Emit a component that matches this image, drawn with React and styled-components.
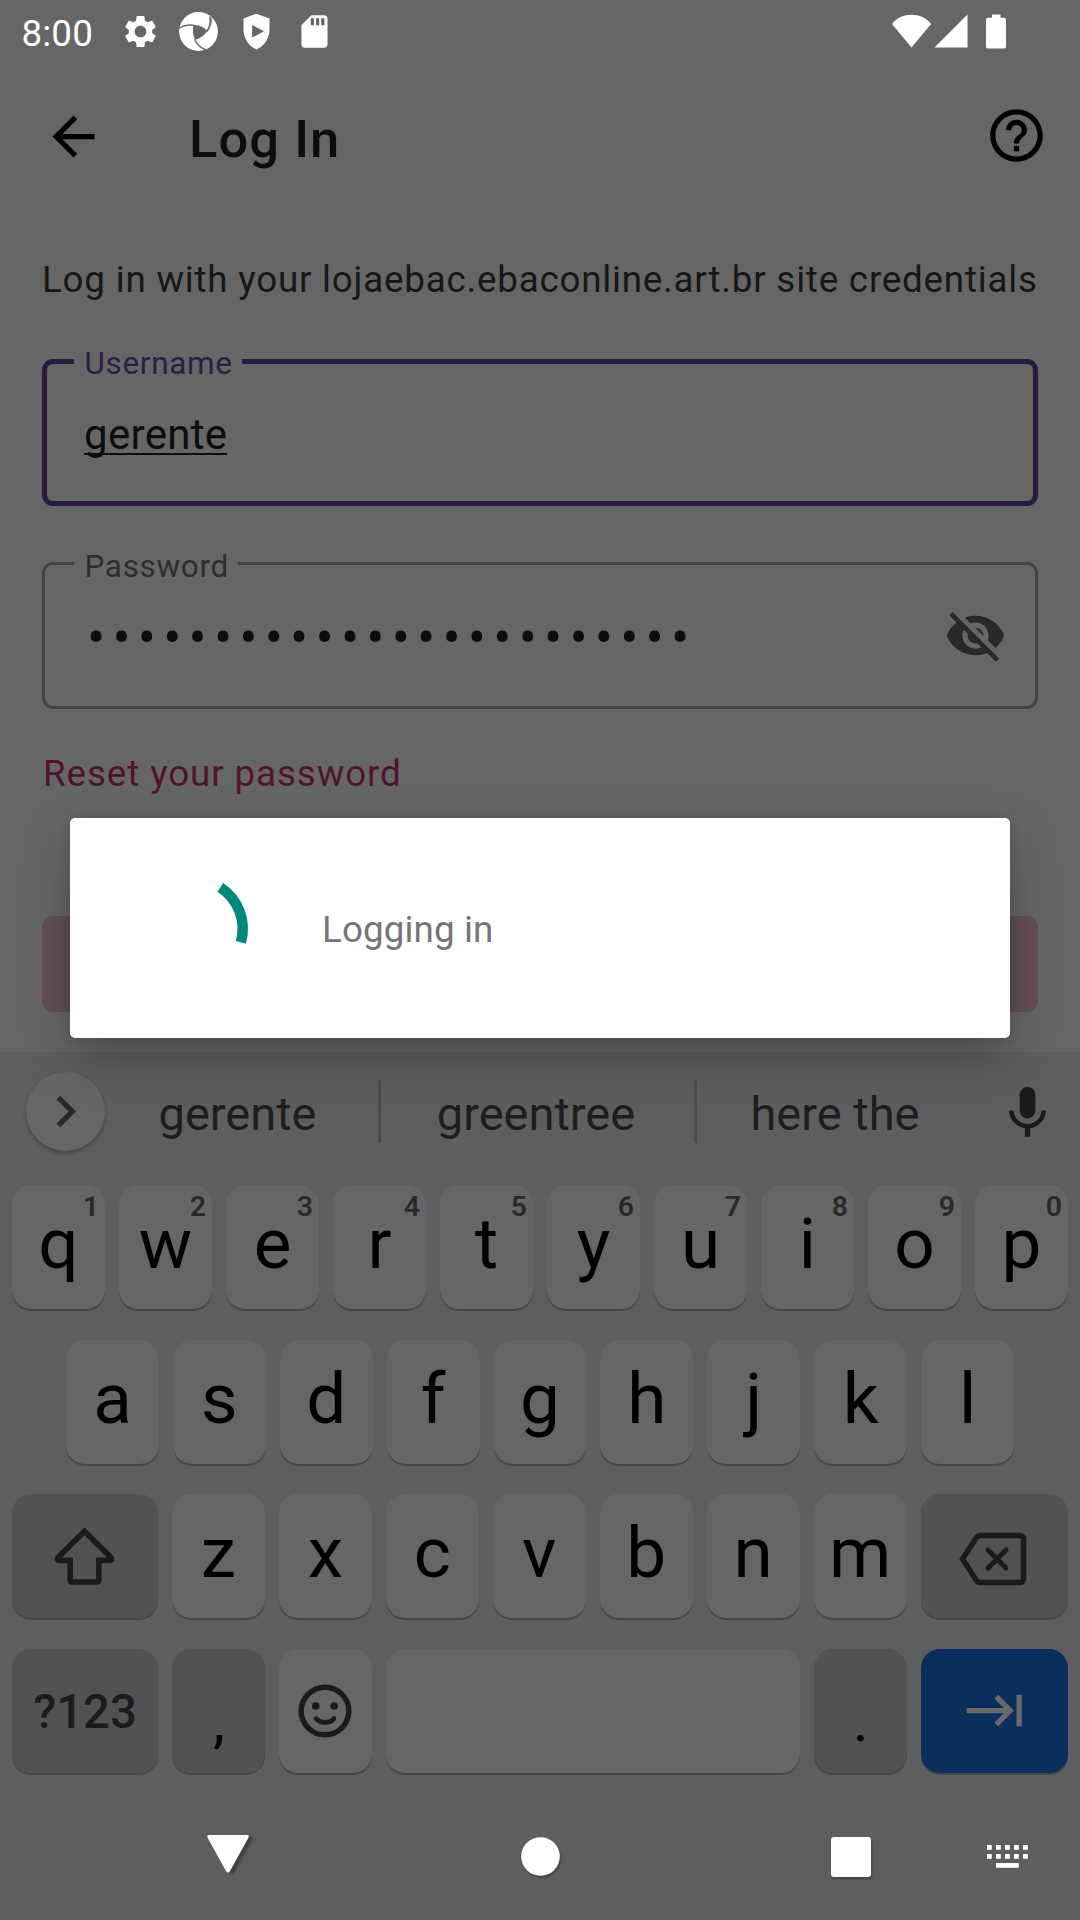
import React from "react";
import styled, { createGlobalStyle, css } from "styled-components";

const GlobalStyle = createGlobalStyle`
  *, *::before, *::after { box-sizing: border-box; }
  body { margin: 0; background: #666; font-family: Roboto, "Noto Sans", sans-serif; }
  svg { display: block; flex: none; }
`;

const Screen = styled.div`
  width: 1080px;
  height: 1920px;
  display: flex;
  flex-direction: column;
  position: relative;
  overflow: hidden;
  background: #666666;
`;

const StatusBar = styled.header`
  height: 63px;
  padding: 0 73px 0 21.5px;
  display: flex;
  align-items: center;
  color: #fff;
`;

const Clock = styled.span`
  width: 99px;
  margin-top: 3px;
  font-size: 36.75px;
  line-height: 43px;
  letter-spacing: 0.15px;
`;

const Notifications = styled.div`
  display: flex;
  gap: 19px;
`;

const SystemIcons = styled.div`
  margin-left: auto;
  display: flex;
  align-items: center;
`;

const AppBar = styled.div`
  height: 147px;
  padding: 0 32px 0 42px;
  display: flex;
  align-items: center;
`;

const Title = styled.h1`
  margin: 4px 0 0 84px;
  flex: 1;
  font-size: 52.5px;
  font-weight: 500;
  line-height: 62px;
  letter-spacing: 1.05px;
  color: #0d0d0d;
`;

const HelpButton = styled.div`
  margin-top: -2px;
`;

const Form = styled.main`
  height: 842px;
  padding: 48px 42px 0;
  display: flex;
  flex-direction: column;
`;

const Intro = styled.p`
  margin: 0;
  height: 84px;
  font-size: 36.75px;
  line-height: 44px;
  letter-spacing: 0.79px;
  white-space: nowrap;
  color: #171717;
`;

const Field = styled.fieldset`
  margin: 0 0 ${(p) => (p.$active ? 38 : 43)}px;
  padding: 0;
  min-width: 0;
  height: ${(p) => (p.$active ? 164 : 165)}px;
  border: ${(p) => (p.$active ? "5px solid #2a1b40" : "3px solid #434343")};
  border-radius: 11px;
  display: block;
`;

const Legend = styled.legend`
  height: 39px;
  margin-left: ${(p) => (p.$active ? 27 : 29)}px;
  padding: 0 9.5px 0 10.5px;
  font-size: 31.5px;
  line-height: ${(p) => (p.$active ? 43 : 45)}px;
  letter-spacing: 0.66px;
  color: ${(p) => (p.$active ? "#2e1d48" : "#2e2e2e")};
`;

const FieldBody = styled.div`
  padding: ${(p) => (p.$active ? "29px 28px 0 37px" : "21px 28px 0 42px")};
  display: flex;
  align-items: flex-start;
  justify-content: space-between;
`;

const Value = styled.span`
  border-bottom: 2px solid #0d0d0d;
  height: 45px;
  font-size: 42px;
  line-height: 50px;
  letter-spacing: 0.32px;
  color: #0d0d0d;
`;

const Bullets = styled.span`
  margin-top: 9px;
  font-size: 54px;
  line-height: 50px;
  letter-spacing: 7.17px;
  color: #0d0d0d;
`;

const ResetLink = styled.a`
  height: 164px;
  padding-left: 1px;
  font-size: 36.75px;
  line-height: 44px;
  letter-spacing: 0.9px;
  color: #51142d;
`;

const SubmitButton = styled.button`
  height: 96px;
  border: 0;
  border-radius: 11px;
  background: #644f56;
`;

const Dialog = styled.div`
  position: absolute;
  left: 70px;
  top: 818px;
  width: 940px;
  height: 220px;
  padding: 0 60px;
  display: flex;
  align-items: center;
  gap: 66px;
  border-radius: 5px;
  background: #fff;
  box-shadow: 0 20px 50px rgba(0, 0, 0, 0.26), 0 0 12px rgba(0, 0, 0, 0.1);
`;

const DialogText = styled.span`
  margin-top: 3px;
  font-size: 36.75px;
  line-height: 44px;
  letter-spacing: 0.12px;
  color: #757575;
`;

const Keyboard = styled.section`
  height: 868px;
  background: #5d5e60;
  display: flex;
  flex-direction: column;
`;

const SuggestionBar = styled.div`
  height: 133px;
  padding: 0 21px 15px 26px;
  display: flex;
  align-items: center;
`;

const Expand = styled.div`
  width: 79px;
  height: 79px;
  margin-right: -8px;
  border-radius: 50%;
  background: #666666;
  display: flex;
  align-items: center;
  justify-content: center;
  box-shadow: 0 2px 4px rgba(0, 0, 0, 0.3);
`;

const Suggestion = styled.span`
  width: ${(p) => p.$width}px;
  padding: 5px ${(p) => p.$shift || 0}px 0 0;
  text-align: center;
  font-size: 47px;
  line-height: 56px;
  color: #1e1e1f;
`;

const Divider = styled.i`
  width: 3px;
  height: 63px;
  background: #4c4c4e;
`;

const MicSlot = styled.div`
  margin: -1px 0 0 auto;
`;

const Keys = styled.div`
  display: grid;
  grid-auto-rows: 124px;
  row-gap: 30.6px;
`;

const KeyRow = styled.div`
  padding: 0 ${(p) => p.$inset || 12}px;
  display: flex;
  gap: 14px;
`;

const tones = {
  light: "#666666",
  dark: "#525254",
  blue: "#0a2e5e",
};

const Key = styled.div`
  position: relative;
  flex: ${(p) => p.$grow || 93} 1 0;
  min-width: 0;
  display: flex;
  align-items: center;
  justify-content: center;
  border-radius: 19px;
  background: ${(p) => tones[p.$tone || "light"]};
  box-shadow: 0 2px 0 #464748;
  color: #000;
  font-size: 71px;
  line-height: 84px;
  ${(p) =>
    p.$label &&
    css`
      padding-top: 2px;
      font-size: 47.25px;
      font-weight: 500;
      color: #1b1b1c;
    `}
`;

const Glyph = styled.span`
  margin-top: -6px;
`;

const Punctuation = styled.span`
  margin: 20px 0 0 1px;
  font-size: 60px;
`;

const Hint = styled.sup`
  position: absolute;
  right: 6px;
  top: 5px;
  font-size: 28.5px;
  font-weight: 600;
  line-height: 34px;
  color: #2a2a2a;
`;

const BackspaceGlyph = styled.div`
  margin: 5px 3px 0 0;
`;

const TabGlyph = styled.div`
  margin-left: 2px;
`;

const NavBar = styled.nav`
  margin-top: 21px;
  height: 126px;
  display: flex;
  align-items: center;
`;

const NavSlot = styled.div`
  width: ${(p) => p.$width}px;
  margin-left: ${(p) => p.$lead || 0}px;
  padding-bottom: ${(p) => p.$lift || 0}px;
  display: flex;
  justify-content: center;
  filter: ${(p) => (p.$flat ? "none" : `drop-shadow(${p.$cast || 1}px 2px 1px rgba(0,0,0,.3))`)};
`;

const Icon = ({ d, size = 63, color = "#000" }) => (
  <svg width={size} height={size} viewBox="0 0 24 24" fill={color}>
    <path d={d} fillRule="evenodd" />
  </svg>
);

const paths = {
  back: "M20 11H7.83l5.59-5.59L12 4l-8 8 8 8 1.41-1.41L7.83 13H20v-2z",
  help: "M11 18h2v-2h-2v2zm1-16C6.48 2 2 6.48 2 12s4.48 10 10 10 10-4.48 10-10S17.52 2 12 2zm0 18c-4.41 0-8-3.59-8-8s3.59-8 8-8 8 3.59 8 8-3.59 8-8 8zm0-14c-2.21 0-4 1.79-4 4h2c0-1.1.9-2 2-2s2 .9 2 2c0 2-3 1.75-3 5h2c0-2.25 3-2.5 3-5 0-2.21-1.79-4-4-4z",
  gear: "M19.14 12.94c.04-.3.06-.61.06-.94 0-.32-.02-.64-.07-.94l2.03-1.58c.18-.14.23-.41.12-.61l-1.92-3.32c-.12-.22-.37-.29-.59-.22l-2.39.96c-.5-.38-1.03-.7-1.62-.94l-.36-2.54c-.04-.24-.24-.41-.48-.41h-3.84c-.24 0-.43.17-.47.41l-.36 2.54c-.59.24-1.13.57-1.62.94l-2.39-.96c-.22-.08-.47 0-.59.22L2.74 8.87c-.12.21-.08.47.12.61l2.03 1.58c-.05.3-.09.63-.09.94s.02.64.07.94l-2.03 1.58c-.18.14-.23.41-.12.61l1.92 3.32c.12.22.37.29.59.22l2.39-.96c.5.38 1.03.7 1.62.94l.36 2.54c.05.24.24.41.48.41h3.84c.24 0 .44-.17.47-.41l.36-2.54c.59-.24 1.13-.56 1.62-.94l2.39.96c.22.08.47 0 .59-.22l1.92-3.32c.12-.22.07-.47-.12-.61l-2.01-1.58zM12 15.6c-1.98 0-3.6-1.62-3.6-3.6s1.62-3.6 3.6-3.6 3.6 1.62 3.6 3.6-1.62 3.6-3.6 3.6z",
  shield: "M12 1 4 4v6.7c0 5.4 3.2 10.200 8 12.300 4.800-2.100 8-6.900 8-12.300V4L12 1zM9.300 8l7.200 3.900-7.200 3.900z",
  sd: "M18 2h-8L4 8v12c0 1.100.900 2 2 2h12c1.100 0 2-.900 2-2V4c0-1.100-.900-2-2-2zM9.700 3.800h2v4.400h-2zM12.900 3.800h2v4.400h-2zM16.100 3.800h2v4.400h-2z",
  eyeOff: "M12 7c2.76 0 5 2.24 5 5 0 .65-.13 1.26-.36 1.83l2.92 2.92c1.51-1.26 2.7-2.89 3.43-4.75-1.73-4.39-6-7.5-11-7.5-1.4 0-2.74.25-3.98.7l2.16 2.16C10.74 7.13 11.35 7 12 7zM2 4.27l2.28 2.28.46.46C3.08 8.3 1.78 10.02 1 12c1.73 4.39 6 7.5 11 7.5 1.55 0 3.03-.3 4.38-.84l.42.42L19.73 22 21 20.73 3.27 3 2 4.27zM7.53 9.8l1.55 1.55c-.05.21-.08.43-.08.65 0 1.66 1.34 3 3 3 .22 0 .44-.03.65-.08l1.55 1.55c-.67.33-1.41.53-2.2.53-2.76 0-5-2.24-5-5 0-.79.2-1.53.53-2.2zm4.31-.78l3.15 3.15.02-.16c0-1.66-1.34-3-3-3l-.17.01z",
  chevron: "M10 6L8.59 7.41 13.17 12l-4.58 4.59L10 18l6-6z",
  mic: "M12 15c1.66 0 2.99-1.34 2.99-3L15 6c0-1.66-1.34-3-3-3S9 4.34 9 6v6c0 1.66 1.34 3 3 3zm5.3-3c0 3-2.54 5.1-5.3 5.1S6.7 15 6.7 12H5c0 3.42 2.72 6.23 6 6.72V22h2v-3.28c3.28-.48 6-3.3 6-6.72h-1.7z",
  tab: "M11.59 7.41L15.17 11H1v2h14.17l-3.59 3.59L13 18l6-6-6-6-1.41 1.41zM20 6v12h2V6h-2z",
};

const Swirl = () => (
  <svg width="39" height="39" viewBox="0 0 39 39">
    <circle cx="19.5" cy="19.5" r="19.4" fill="#fff" />
    <path d="M14.3 13C19.500 12.600 24.500 14.500 28.200 19 25.500 23.500 21.500 26.500 16 27.800 14 23 13.300 18 14.300 13z" fill="#666" />
    <g fill="none" stroke="#666" strokeLinecap="butt">
      <path d="M0 16.300C4.500 13.200 10 12.300 15.500 13.400" strokeWidth="1.500" />
      <path d="M27.800 19.500C31 15.500 31.800 10.500 31 4.500" strokeWidth="1.600" />
      <path d="M15.700 27C17.500 32 21 35.800 27 37.800" strokeWidth="1.300" />
      <path d="M29.500 17C31.800 13 33 10 32.800 6" strokeWidth=".800" />
    </g>
  </svg>
);

const StatusIcons = () => (
  <svg width="116" height="39" viewBox="0 0 116 39" fill="#fff">
    <path d="M1 12C10 -.2 31 -.2 40 12L20.500 35.500z" />
    <path d="M43.500 35.500 76.500 2.500v33z" />
    <path d="M101 2.500h8.500v3.300h3.500q2 0 2 2v26.700q0 2-2 2H97q-2 0-2-2V7.800q0-2 2-2h4z" />
  </svg>
);

const Spinner = () => (
  <svg width="126" height="126" viewBox="0 0 126 126">
    <path d="M90.300 22.300A49.700 49.700 0 0 1 110.900 77.300" fill="none" stroke="#00897b" strokeWidth="10.500" />
  </svg>
);

const ShiftIcon = () => (
  <svg width="63" height="63" viewBox="0 0 63 63" fill="none" stroke="#1b1b1c" strokeWidth="5.600">
    <path d="M31.500 6.200 58.200 32.800Q59.500 35.200 57 35.400H45.800V55Q45.800 57 43.800 57H19.200Q17.200 57 17.200 55V35.400H6Q3.500 35.200 4.800 32.800z" />
  </svg>
);

const DeleteIcon = () => (
  <svg width="68" height="54" viewBox="0 0 68 54" fill="none" stroke="#1b1b1c" strokeWidth="5.500" strokeLinecap="round">
    <path d="M21 3.500H60.500Q64.500 3.500 64.500 7.500V46.500Q64.500 50.500 60.500 50.500H21Q19 50.500 17.500 48.500L3.500 27 17.500 5.500Q19 3.500 21 3.500z" />
    <path d="M29 18 47 36M47 18 29 36" strokeWidth="5" />
  </svg>
);

const SmileIcon = () => (
  <svg width="54" height="54" viewBox="0 0 54 54" fill="none" stroke="#1b1b1c" strokeLinecap="round">
    <circle cx="27" cy="27" r="23.800" strokeWidth="5.400" />
    <circle cx="17.800" cy="22" r="3.800" fill="#1b1b1c" stroke="none" />
    <circle cx="36.200" cy="22" r="3.800" fill="#1b1b1c" stroke="none" />
    <path d="M18 34.500C22 39.800 32 39.800 36 34.500" strokeWidth="4.600" />
  </svg>
);

const KeyboardIcon = () => (
  <svg width="41" height="23" viewBox="0 0 41 23" fill="#fff">
    {[0, 9, 18, 27, 36].map((x) => (
      <React.Fragment key={x}>
        <rect x={x} y="0" width="4.800" height="4.800" />
        <rect x={x} y="9" width="4.800" height="4.800" />
      </React.Fragment>
    ))}
    <rect x="9" y="18" width="22.800" height="4.800" />
  </svg>
);

const Letter = ({ children, hint }) => (
  <Key>
    {hint && <Hint>{hint}</Hint>}
    <Glyph>{children}</Glyph>
  </Key>
);

export default function App() {
  return (
    <Screen>
      <GlobalStyle />
      <StatusBar>
        <Clock>8:00</Clock>
        <Notifications>
          <Icon d={paths.gear} size={39} color="#fff" />
          <Swirl />
          <Icon d={paths.shield} size={39} color="#fff" />
          <Icon d={paths.sd} size={39} color="#fff" />
        </Notifications>
        <SystemIcons>
          <StatusIcons />
        </SystemIcons>
      </StatusBar>
      <AppBar>
        <Icon d={paths.back} />
        <Title>Log In</Title>
        <HelpButton>
          <Icon d={paths.help} />
        </HelpButton>
      </AppBar>
      <Form>
        <Intro>Log in with your lojaebac.ebaconline.art.br site credentials</Intro>
        <Field $active>
          <Legend $active>Username</Legend>
          <FieldBody $active>
            <Value>gerente</Value>
          </FieldBody>
        </Field>
        <Field>
          <Legend>Password</Legend>
          <FieldBody>
            <Bullets>{"•".repeat(24)}</Bullets>
            <Icon d={paths.eyeOff} color="#292929" />
          </FieldBody>
        </Field>
        <ResetLink>Reset your password</ResetLink>
        <SubmitButton disabled />
      </Form>
      <Keyboard>
        <SuggestionBar>
          <Expand>
            <Icon d={paths.chevron} color="#292929" />
          </Expand>
          <Suggestion $width={281}>gerente</Suggestion>
          <Divider />
          <Suggestion $width={313} $shift={3}>greentree</Suggestion>
          <Divider />
          <Suggestion $width={278} $shift={2}>here the</Suggestion>
          <MicSlot>
            <Icon d={paths.mic} color="#1b1b1c" />
          </MicSlot>
        </SuggestionBar>
        <Keys>
          <KeyRow>
            {[..."qwertyuiop"].map((c, i) => (
              <Letter key={c} hint={String((i + 1) % 10)}>{c}</Letter>
            ))}
          </KeyRow>
          <KeyRow $inset={66}>
            {[..."asdfghjkl"].map((c) => (
              <Letter key={c}>{c}</Letter>
            ))}
          </KeyRow>
          <KeyRow>
            <Key $tone="dark" $grow={146}><ShiftIcon /></Key>
            {[..."zxcvbnm"].map((c) => (
              <Letter key={c}>{c}</Letter>
            ))}
            <Key $tone="dark" $grow={147.5}>
              <BackspaceGlyph><DeleteIcon /></BackspaceGlyph>
            </Key>
          </KeyRow>
          <KeyRow>
            <Key $tone="dark" $grow={146} $label>?123</Key>
            <Key $tone="dark"><Punctuation>,</Punctuation></Key>
            <Key><SmileIcon /></Key>
            <Key $grow={414} />
            <Key $tone="dark"><Punctuation>.</Punctuation></Key>
            <Key $tone="blue" $grow={147.5}>
              <TabGlyph><Icon d={paths.tab} color="#6a6a6a" /></TabGlyph>
            </Key>
          </KeyRow>
        </Keys>
        <NavBar>
          <NavSlot $width={456} $lift={5} $cast={4}>
            <svg width="42" height="38" viewBox="0 0 42 38" fill="#fff">
              <path d="M2 0H40Q42.500 0 41.500 2.500L23 36Q21 39 19 36L.5 2.500Q-.5 0 2 0z" />
            </svg>
          </NavSlot>
          <NavSlot $width={168}>
            <svg width="39" height="39"><circle cx="19.500" cy="19.500" r="19.300" fill="#fff" /></svg>
          </NavSlot>
          <NavSlot $width={206} $lead={124}>
            <svg width="40" height="40"><rect width="40" height="40" rx="3" fill="#fff" /></svg>
          </NavSlot>
          <NavSlot $width={107} $flat>
            <KeyboardIcon />
          </NavSlot>
        </NavBar>
      </Keyboard>
      <Dialog role="dialog">
        <Spinner />
        <DialogText>Logging in</DialogText>
      </Dialog>
    </Screen>
  );
}
